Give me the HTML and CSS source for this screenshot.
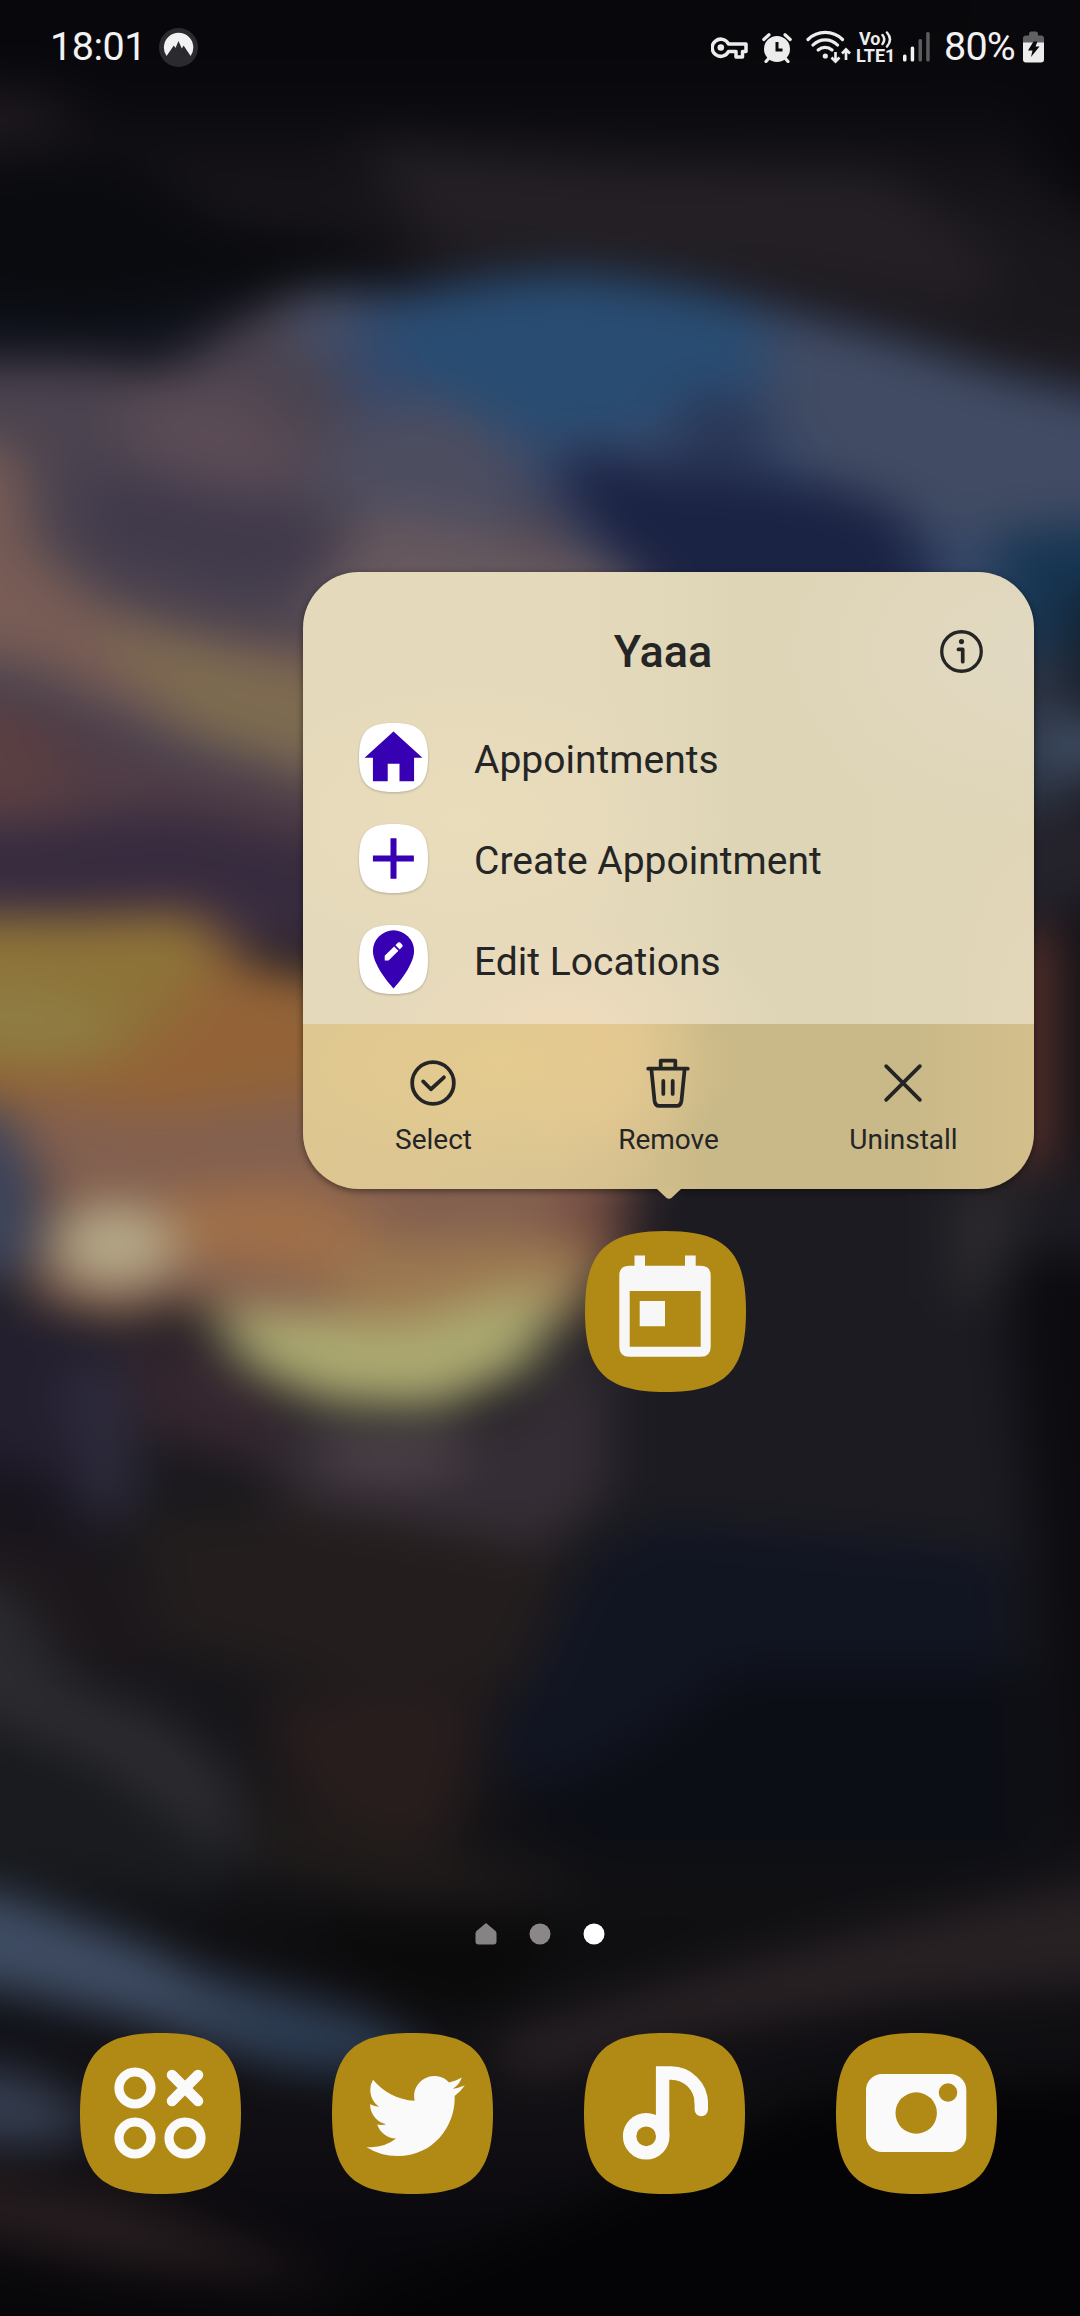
FILE: index.html
```html
<!DOCTYPE html>
<html lang="en">
<head>
<meta charset="utf-8">
<title>Home screen</title>
<link rel="stylesheet" href="styles.css">
</head>
<body>
<svg class="wallpaper" viewBox="0 0 731 1568" preserveAspectRatio="none" aria-hidden="true">
  <defs>
    <filter id="soft" filterUnits="userSpaceOnUse" x="-120" y="-120" width="980" height="1820" color-interpolation-filters="sRGB"><feGaussianBlur stdDeviation="18 15"/></filter>
    <linearGradient id="base" x1="0" y1="0" x2="0" y2="1">
      <stop offset="0" stop-color="#060609"/><stop offset=".1" stop-color="#09090d"/><stop offset=".14" stop-color="#18151a"/><stop offset=".2" stop-color="#1c191e"/>
      <stop offset=".5" stop-color="#1c1b21"/><stop offset=".66" stop-color="#19181c"/><stop offset=".8" stop-color="#0e0e11"/>
      <stop offset=".86" stop-color="#110f13"/><stop offset=".9" stop-color="#09080c"/><stop offset="1" stop-color="#030304"/>
    </linearGradient>
    <path id="squircle" d="M80.500 0C140.500 0 161 20.500 161 80.500S140.500 161 80.500 161 0 140.500 0 80.500 20.500 0 80.500 0Z"/>
  </defs>
  <g filter="url(#soft)">
    <rect x="-120" y="-120" width="980" height="1820" fill="url(#base)"/>
    <path d="M-60 60L30 60 60 90-60 105Z" fill="#1d181e"/>
    <path d="M-60 115L80 108 150 150 240 160 290 190 170 215 60 235-60 220Z" fill="#0a0b0f"/>
    <path d="M240 95L420 110 600 115 680 180 660 210 540 190 300 170Z" fill="#231f24"/>
    <path d="M640-40H860V220L710 130Z" fill="#09090d"/>
    <path d="M-60 205L60 215 150 200 210 205 120 245-60 245Z" fill="#10131d"/>
    <path d="M-60 246L60 246 110 252 160 220 200 197 250 200 330 280 440 400 300 620-60 640Z" fill="#4b434f"/>
    <path d="M190 210L225 194 270 200 275 240 205 245Z" fill="#484f65"/>
    <path d="M220 230L255 200 330 190 400 188 500 201 600 227 680 253 860 295V430H440L370 335 260 330Z" fill="#38496a"/>
    <path d="M250 210L330 188 390 184 470 194 535 225 510 270 430 292 340 300 270 250Z" fill="#294c72"/>
    <path d="M520 215L600 233 700 265 860 305V370L660 365 560 330 520 270Z" fill="#414b63"/>
    <path d="M220 290L300 270 350 300 350 370 220 340Z" fill="#4d4d60"/>
    <path d="M470 262L520 275 520 340 440 330Z" fill="#2b3757"/>
    <path d="M375 318L400 303 450 320 550 325 610 345 640 400 540 440H450Z" fill="#1b2344"/>
    <path d="M675 360L860 345V440H675Z" fill="#163552"/>
    <path d="M690 440H716V600H690Z" fill="#35435a"/>
    <path d="M724 400H860V470H728Z" fill="#14202d"/>
    <path d="M690 485H860V525H690Z" fill="#3c4a60"/>
    <path d="M660 550H860V620H660Z" fill="#24222b"/>
    <path d="M670 630H714V805H670Z" fill="#56302a"/>
    <path d="M724 610H860V850H724Z" fill="#110f14"/>
    <path d="M85 265L165 262 220 320 150 335 90 310Z" fill="#5a4b56"/>
    <path d="M50 320L120 325 220 350 260 395 150 400 60 375Z" fill="#413a4b"/>
    <path d="M-60 290L12 305 22 370 70 410 140 430 240 445V535L130 500 20 450-60 440Z" fill="#785c55"/>
    <path d="M60 422L130 435 240 462V532L130 497Z" fill="#7d6b50"/>
    <path d="M250 345L340 362 420 382 450 420H200Z" fill="#66585e"/>
    <path d="M-60 470L30 475 110 520 230 545V640H-60Z" fill="#503c45"/>
    <path d="M-60 475L20 480 50 550-60 550Z" fill="#5b3f42"/>
    <path d="M-60 566L120 548 240 575V650L150 625-60 612Z" fill="#372b3f"/>
    <path d="M-60 622L60 620 130 616 170 655 240 665V840L30 790-60 750Z" fill="#936337"/>
    <path d="M-60 624L60 624 130 624 145 650 110 690 70 722-60 722Z" fill="#8d7338"/>
    <path d="M-60 660L50 672 90 705 20 720-60 690Z" fill="#8f7d43"/>
    <path d="M10 742L110 755 230 740 440 780 425 850 360 900 280 925 200 920 130 880 80 895 20 880 30 810Z" fill="#83604f"/>
    <path d="M-60 735L5 752 20 785 26 830 10 870-60 860Z" fill="#3a435c"/>
    <path d="M110 808L200 800 260 825 230 868 120 850Z" fill="#9f6f49"/>
    <path d="M380 805H430V850L380 840Z" fill="#70473f"/>
    <path d="M230 845L320 838 410 840 395 890 340 910 230 895Z" fill="#9c7850"/>
    <ellipse cx="78" cy="843" rx="42" ry="28" fill="#b5a888"/>
    <path d="M138 886L210 888 270 895 340 875 385 868 360 925 296 954 220 950 170 928Z" fill="#aba870"/>
    <path d="M-60 880L30 890 80 912 90 1030 50 1035-60 1000Z" fill="#231f2f"/>
    <path d="M45 930L85 920 92 1020 65 1025Z" fill="#302d40"/>
    <path d="M-60 980L40 1000 60 1050-60 1060Z" fill="#17141d"/>
    <path d="M85 900L150 915 200 960 190 995 100 970Z" fill="#35262f"/>
    <path d="M180 960L250 972 330 965 380 930 412 890 412 1010 360 1060 200 1040Z" fill="#352d35"/>
    <path d="M210 965L280 970 320 965 300 1000 230 1000Z" fill="#4f444b"/>
    <path d="M425 790H860V1060H412Z" fill="#1c1b21"/>
    <path d="M645 805H690L675 880 648 880Z" fill="#2e2c30"/>
    <path d="M680 850H860V1240H720Z" fill="#0b0b10"/>
    <path d="M-60 1020L60 1050 130 1120 60 1130-60 1070Z" fill="#1c171b"/>
    <path d="M90 1030L210 1020 380 1050 375 1140 250 1150 110 1110Z" fill="#231d1d"/>
    <path d="M-60 1060L10 1075 50 1140 110 1160 160 1200 170 1270 60 1195-60 1150Z" fill="#2a2a2f"/>
    <path d="M-60 1160L50 1200 160 1260 150 1290-60 1260Z" fill="#191b1f"/>
    <path d="M180 1150L330 1150 310 1240 260 1260 190 1200Z" fill="#281d1d"/>
    <path d="M170 1210L270 1240 400 1285 260 1285 180 1270Z" fill="#201b1a"/>
    <path d="M385 1070L440 1030 680 1050 690 1200 470 1160 370 1215 330 1190Z" fill="#111522"/>
    <path d="M340 1225L430 1180 500 1130 700 1130V1260H400Z" fill="#0c0e15"/>
    <path d="M190 1300L400 1300 330 1365 260 1350Z" fill="#0b0a0a"/>
    <path d="M-60 1268L10 1283 90 1313 140 1338 250 1366 300 1402 200 1402 90 1367 0 1347-60 1342Z" fill="#3e4c63"/>
    <path d="M110 1345L240 1368 300 1404 200 1402Z" fill="#2b3c53"/>
    <path d="M-60 1360L50 1375 70 1388-60 1382Z" fill="#12141d"/>
    <path d="M-60 1395L20 1402 70 1435 40 1455-60 1450Z" fill="#343c4e"/>
    <path d="M330 1380L450 1343 560 1314 680 1286 860 1256V1335L620 1352 450 1380 350 1412Z" fill="#282124"/>
    <path d="M-60 1465L80 1485 230 1545 80 1535-60 1505Z" fill="#251c1e"/>
    <path d="M400 1490L540 1420 860 1400V1700H230L240 1560Z" fill="#040406"/>
  </g>
</svg>

<div class="phone">
  <header class="status">
    <div class="status-left">
      <span class="clock">18:01</span>
      <svg class="vpn" viewBox="0 0 39 39"><circle cx="19.500" cy="19.500" r="19.500" fill="#2b2b2f"/><path d="M7.600 28A14.700 14.700 0 1 1 31.600 28L24.600 17.500 22.800 20.500 19.500 13 16.500 20 14.800 17.500Z" fill="#f2f2f2"/></svg>
    </div>
    <div class="status-right">
      <svg class="i-key" viewBox="0 0 37 22" fill="none" stroke="#ececec"><path d="M17.500 7H35V14.500H31.500V20H25V14.500H17.500A8.600 8.600 0 1 1 17.500 7Z" stroke-width="3.500" stroke-linejoin="round"/><circle cx="9.800" cy="10.500" r="3.300" fill="#ececec" stroke="none"/></svg>
      <svg class="i-alarm" viewBox="0 0 30 30"><circle cx="15" cy="16" r="13" fill="#ececec"/><path d="M1.800 6.500L7 1.800M28.200 6.500L23 1.800M4 28.500L7.500 24.500M26 28.500L22.500 24.500" stroke="#ececec" stroke-width="3.200" stroke-linecap="round"/><path d="M15 9V17H20.500" fill="none" stroke="#0a0a0d" stroke-width="3"/></svg>
      <svg class="i-wifi" viewBox="0 0 45 34" fill="none" stroke="#ececec" stroke-width="3.200" stroke-linecap="round"><path d="M2 9.500A24.500 24.500 0 0 1 36.500 9.500M7 15A17 17 0 0 1 31.500 15M12.200 20A10.500 10.500 0 0 1 26 20"/><circle cx="19.300" cy="26" r="2.600" fill="#ececec" stroke="none"/><path d="M29.500 22V31M25.500 27.500L29.500 31.500 33.500 27.500M40 30V20M36 23.500L40 19.500 44 23.500" stroke-width="2.700" stroke-linecap="butt"/></svg>
      <div class="volte"><span class="vo">Vo<svg viewBox="0 0 11 17" fill="none" stroke="#ececec" stroke-width="2.500" stroke-linecap="round"><path d="M1.500 4Q5 8.500 1.500 13M6 1.500Q12 8.500 6 15.500"/></svg></span><span>LTE1</span></div>
      <svg class="i-signal" viewBox="0 0 28 30"><rect x="0" y="22.500" width="3.500" height="7" rx="1.500" fill="#f4f4f4"/><rect x="7.700" y="14.500" width="3.500" height="15" rx="1.500" fill="#f4f4f4"/><rect x="15.500" y="7" width="3.500" height="22.500" rx="1.500" fill="#5c5c5f"/><rect x="23.200" y="0" width="3.500" height="29.500" rx="1.500" fill="#5c5c5f"/></svg>
      <span class="percent">80%</span>
      <svg class="i-battery" viewBox="0 0 21 32"><path d="M6 3Q6 .5 8 .5H13Q15 .5 15 3V4.500H18Q21 4.500 21 7.500V12H0V7.500Q0 4.500 3 4.500H6Z" fill="#606062"/><path d="M0 11.500H21V28.500Q21 31.500 18 31.500H3Q0 31.500 0 28.500Z" fill="#ececec"/><path d="M10.500 10.500H14.500L12.500 15.500H16.500L8 26 9.500 19.500H5Z" fill="#0a0a0d"/></svg>
    </div>
  </header>

  <section class="popup">
    <div class="popup-main">
      <div class="popup-head">
        <h1>Yaaa</h1>
        <svg class="info" viewBox="0 0 42 42"><circle cx="21" cy="21" r="19.300" fill="none" stroke="#252525" stroke-width="3.200"/><circle cx="21" cy="11.300" r="2.500" fill="#252525"/><path d="M18 19H22.200V31" fill="none" stroke="#252525" stroke-width="3.600" stroke-linecap="round" stroke-linejoin="round"/></svg>
      </div>
      <ul class="shortcuts">
        <li>
          <svg viewBox="0 0 161 161"><use href="#squircle" fill="#fff"/><path d="M80.500 20L148 81H128.500V136H94.500V95H67V136H32.500V81H13Z" fill="#3700b3"/></svg>
          <span>Appointments</span>
        </li>
        <li>
          <svg viewBox="0 0 161 161"><use href="#squircle" fill="#fff"/><path d="M73.500 33H87.500V73.500H128V87.500H87.500V128H73.500V87.500H32.500V73.500H73.500Z" fill="#3700b3"/></svg>
          <span>Create Appointment</span>
        </li>
        <li>
          <svg viewBox="0 0 161 161"><use href="#squircle" fill="#fff"/><path d="M80.500 12.500A48 48 0 0 0 32.500 60.500C32.500 96.500 80.500 148 80.500 148S128.500 96.500 128.500 60.500A48 48 0 0 0 80.500 12.500Z" fill="#3700b3"/><path d="M60 83V72L82 50 92 60 69 83ZM85 47L91 41Q94 39 96 41L101 46Q103 49 101 51L95 57Z" fill="#fff"/></svg>
          <span>Edit Locations</span>
        </li>
      </ul>
    </div>
    <div class="actions">
      <div class="action"><svg viewBox="0 0 48 48"><circle cx="24" cy="24" r="20"/><path d="M14.500 22.500L22 30 34.500 18.500"/></svg><span>Select</span></div>
      <div class="action"><svg viewBox="0 0 48 48"><path d="M5 10.300H43M17 10V2.500H31V10M8 10.500L11 40.500Q11.700 46 15.500 46H32.500Q36.300 46 37 40.500L40 10.500M19.500 22V34.500M28.500 22V34.500"/></svg><span>Remove</span></div>
      <div class="action"><svg viewBox="0 0 48 48"><path d="M7.800 7.800L40.200 40.200M40.200 7.800L7.800 40.200"/></svg><span>Uninstall</span></div>
    </div>
    <svg class="tail" viewBox="0 0 24 11"><path d="M0 0H24L15 8.500Q12 11 9 8.500Z" fill="#d0be8b"/></svg>
  </section>

  <svg class="app selected" viewBox="0 0 161 161"><use href="#squircle" fill="#b08a15"/><path d="M49.500 34.700V24.500H60V34.700H100V24.500H110.700V34.700H115.700Q125.700 34.700 125.700 44.700V115.700Q125.700 125.700 115.700 125.700H44.300Q34.300 125.700 34.300 115.700V44.700Q34.300 34.700 44.300 34.700ZM44.700 60V115.700H115.700V60ZM54.700 70H80V95.300H54.700Z" fill-rule="evenodd" fill="#f7f7f7"/></svg>

  <nav class="pages">
    <svg viewBox="0 0 22 22"><path d="M11 0L20.500 8Q21.500 9 21.500 10.500V18.500Q21.500 21.500 18.500 21.500H3.500Q.5 21.500 .5 18.500V10.500Q.5 9 1.500 8Z" fill="#858383"/></svg>
    <svg viewBox="0 0 22 22"><circle cx="11" cy="11" r="10.500" fill="#8b8786"/></svg>
    <svg viewBox="0 0 22 22"><circle cx="11" cy="11" r="10.500" fill="#fff"/></svg>
  </nav>

  <footer class="dock">
    <svg class="app" viewBox="0 0 161 161"><use href="#squircle" fill="#b08a15"/><g fill="none" stroke="#fafafa"><g stroke-width="9.200"><circle cx="55" cy="55" r="16"/><circle cx="55" cy="105" r="16"/><circle cx="105" cy="105" r="16"/></g><path d="M92 42L118 68M118 42L92 68" stroke-width="10.500" stroke-linecap="round"/></g></svg>
    <svg class="app" viewBox="0 0 161 161"><use href="#squircle" fill="#b08a15"/><path transform="translate(34.300 33.800) scale(4.100)" fill="#fafafa" d="M23.953 4.570a10 10 0 01-2.825.775 4.958 4.958 0 002.163-2.723c-.951.555-2.005.959-3.127 1.184a4.920 4.920 0 00-8.384 4.482C7.690 8.095 4.067 6.130 1.640 3.162a4.822 4.822 0 00-.666 2.475c0 1.710.870 3.213 2.188 4.096a4.904 4.904 0 01-2.228-.616v.060a4.923 4.923 0 003.946 4.827 4.996 4.996 0 01-2.212.085 4.936 4.936 0 004.604 3.417 9.867 9.867 0 01-6.102 2.105c-.390 0-.779-.023-1.170-.067a13.995 13.995 0 007.557 2.209c9.053 0 13.998-7.496 13.998-13.985 0-.210 0-.420-.015-.630A9.935 9.935 0 0024 4.590z"/></svg>
    <svg class="app" viewBox="0 0 161 161"><use href="#squircle" fill="#b08a15"/><g fill="none" stroke="#fafafa" stroke-width="13.400"><circle cx="62.200" cy="103.300" r="16.600"/><path d="M78.600 103.300V40H87A30.300 30.300 0 0 1 117.300 70.300"/><path d="M117.300 69V76.600" stroke-linecap="round"/></g></svg>
    <svg class="app" viewBox="0 0 161 161"><use href="#squircle" fill="#b08a15"/><rect x="30" y="41" width="100.300" height="78" rx="16" fill="#fafafa"/><circle cx="80.200" cy="80" r="20.700" fill="#b08a15"/><circle cx="112" cy="59.500" r="9.300" fill="#b08a15"/></svg>
  </footer>
</div>
</body>
</html>
```
FILE: styles.css
```css
* {
  box-sizing: border-box;
}

body {
  margin: 0;
  background: #08080c;
  font-family: Roboto, "Noto Sans", sans-serif;
  color: #252525;
}

svg {
  display: block;
  flex: none;
}

/* Blurred artwork behind everything */
.wallpaper {
  position: absolute;
  inset: 0;
  width: 1080px;
  height: 2316px;
}

.phone {
  position: relative;
  width: 1080px;
  height: 2316px;
  display: flex;
  flex-direction: column;
}

/* Status bar */
.status {
  height: 95px;
  padding: 0 36px 0 50px;
  display: flex;
  justify-content: space-between;
  align-items: center;
  color: #f2f2f2;
}

.status-left,
.status-right {
  display: flex;
  align-items: center;
}

.clock,
.percent {
  padding-bottom: 2px;
  font-size: 39.500px;
  line-height: 46px;
}

.clock {
  width: 109px;
  letter-spacing: -0.500px;
}

.vpn {
  width: 39px;
  height: 39px;
}

.i-key {
  width: 37px;
  height: 22px;
  margin-right: 14px;
}

.i-alarm {
  width: 30px;
  height: 30px;
  margin-right: 14px;
}

.i-wifi {
  width: 45px;
  height: 34px;
  margin: -2px 5px 0 0;
}

.volte {
  width: 39px;
  margin-right: 8px;
  display: flex;
  flex-direction: column;
  font-size: 18px;
  font-weight: 700;
  line-height: 16px;
  color: #ececec;
}

.vo {
  padding-left: 3px;
  display: flex;
}

.vo svg {
  width: 11px;
  height: 17px;
}

.i-signal {
  width: 28px;
  height: 30px;
  margin: -2px 13px 0 0;
}

.percent {
  width: 79px;
  letter-spacing: -0.800px;
}

.i-battery {
  width: 21px;
  height: 32px;
  margin-top: -1px;
}

/* Shortcut popup */
.popup {
  position: relative;
  width: 731px;
  height: 617px;
  margin: 477px 0 0 303px;
  display: flex;
  flex-direction: column;
  border-radius: 56px;
  box-shadow: 0 2px 7px rgba(0, 0, 0, 0.450);
}

.popup-main {
  height: 452px;
  border-radius: 56px 56px 0 0;
  background:
    radial-gradient(ellipse 220px 110px at 35% 100%, #eedbbc, transparent),
    radial-gradient(ellipse 260px 160px at 22% 55%, rgba(234, 221, 187, 0.900), transparent),
    radial-gradient(ellipse 260px 180px at 100% 18%, #e1d9c2, transparent),
    radial-gradient(ellipse 100px 240px at 100% 100%, #e3d7b8, transparent),
    linear-gradient(90deg, #e4d9bb 0%, #e4d9bb 40%, #ded5b7 60%, #dfd5b7 100%);
}

.popup-head {
  height: 136px;
  padding: 53px 51px 0 0;
  display: flex;
}

.popup-head h1 {
  flex: 1;
  margin: 0;
  padding-left: 83px;
  font-size: 45px;
  font-weight: 500;
  line-height: 54px;
  text-align: center;
}

.info {
  width: 43px;
  height: 43px;
  margin-top: 5px;
}

.shortcuts {
  margin: 0;
  padding: 0 0 0 56px;
  list-style: none;
}

.shortcuts li {
  height: 101px;
  padding-top: 15px;
  display: flex;
  align-items: flex-start;
  gap: 46px;
  font-size: 39px;
  line-height: 74px;
}

.shortcuts svg {
  width: 69px;
  height: 69px;
  filter: drop-shadow(0 1px 1px rgba(0, 0, 0, 0.220));
}

.actions {
  height: 165px;
  padding: 34px 13px 0;
  display: grid;
  grid-template-columns: repeat(3, 235px);
  border-radius: 0 0 56px 56px;
  background:
    radial-gradient(ellipse 240px 110px at 27% 24%, #e5cb8f, transparent),
    radial-gradient(ellipse 100px 160px at 41% 10%, #e5c693, transparent),
    linear-gradient(90deg, #dec691 0%, #dac592 34%, #cab988 56%, #cab988 84%, #d3bf8c 100%);
}

.action {
  display: flex;
  flex-direction: column;
  align-items: center;
  font-size: 28px;
  line-height: 32px;
}

.action svg {
  width: 50px;
  height: 50px;
  margin: 0 1px 16px 0;
  fill: none;
  stroke: #252525;
  stroke-width: 3.600;
  stroke-linecap: round;
  stroke-linejoin: round;
}

.tail {
  position: absolute;
  left: 354px;
  top: 617px;
  width: 24px;
  height: 11px;
}

/* App icons */
.app {
  width: 161px;
  height: 161px;
}

.selected {
  margin: 42px 0 0 585px;
}

.pages {
  margin-top: 531px;
  display: flex;
  justify-content: center;
  gap: 32px;
}

.pages svg {
  width: 22px;
  height: 22px;
}

.dock {
  margin-top: 88px;
  padding-left: 80px;
  display: flex;
  gap: 91px;
}
```
